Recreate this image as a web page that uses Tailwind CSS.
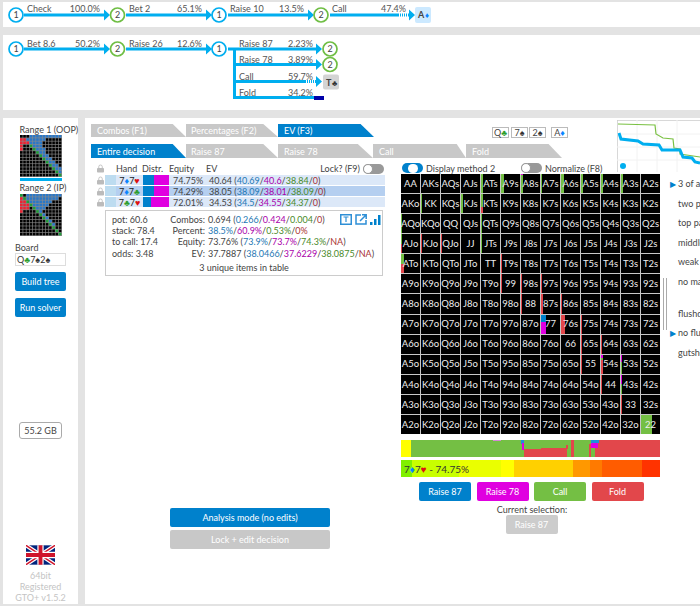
<!DOCTYPE html>
<html lang="en">
<head>
<meta charset="UTF-8">
<title>GTO+</title>
<script src="https://cdn.jsdelivr.net/npm/@tailwindcss/browser@4"></script>
</head>
<body class="bg-[#e3e3e3] w-[700px] h-[606px] overflow-hidden font-['Lato',sans-serif] text-[9px] leading-none text-[#444]">

<!-- line 1 of the tree -->
<div class="ml-[3px] mt-[2px] h-[25px] bg-white">
<svg width="697" height="25" viewBox="3 2 697 25" class="block font-['Lato',sans-serif] text-[9px]">
  <g stroke="#00aeef" stroke-width="3" fill="none">
    <path d="M24 15H106M126 15H208M228 15H310M330 15H398"/>
  </g>
  <path d="M398 15h12" stroke="#00aeef" stroke-width="3" stroke-dasharray="1 1"/>
  <g fill="#00aeef"><path d="M104 9.500l6 5.500-6 5.500zM206 9.500l6 5.500-6 5.500zM308 9.500l6 5.500-6 5.500zM409 9.500l6 5.500-6 5.500z"/></g>
  <g fill="#fff" stroke-width="1.700">
    <circle cx="16" cy="15" r="7" stroke="#00aeef"/><circle cx="117.500" cy="15" r="7" stroke="#6fbe44"/>
    <circle cx="219" cy="15" r="7" stroke="#00aeef"/><circle cx="321" cy="15" r="7" stroke="#6fbe44"/>
  </g>
  <g fill="#444" text-anchor="middle"><text x="16" y="18">1</text><text x="117.500" y="18">2</text><text x="219" y="18">1</text><text x="321" y="18">2</text></g>
  <g fill="#555"><text x="27" y="12">Check</text><text x="129" y="12">Bet 2</text><text x="230" y="12">Raise 10</text><text x="332" y="12">Call</text></g>
  <g fill="#555" text-anchor="end"><text x="100" y="12">100.0%</text><text x="202" y="12">65.1%</text><text x="304" y="12">13.5%</text><text x="406" y="12">47.4%</text></g>
  <rect x="415" y="7" width="16" height="16" rx="2" fill="#cce9ff"/>
  <text x="418" y="18" fill="#444" font-weight="700">A</text><text x="425" y="18" fill="#0a84ff" font-size="8">♦</text>
</svg>
</div>

<!-- line 2 of the tree -->
<div class="ml-[3px] mt-[8px] h-[75px] bg-white">
<svg width="697" height="75" viewBox="3 35 697 75" class="block font-['Lato',sans-serif] text-[9px]">
  <g stroke="#00aeef" stroke-width="3" fill="none">
    <path d="M24 49H106M126 49H208M228 49H318M234.500 49V97.500H314M235 64.500H318M235 81.500H306"/>
  </g>
  <path d="M305 81.500h14" stroke="#00aeef" stroke-width="3" stroke-dasharray="1 1"/>
  <g fill="#00aeef"><path d="M104 43.500l6 5.500-6 5.500zM206 43.500l6 5.500-6 5.500zM316 43.500l6 5.500-6 5.500zM316 59l6 5.500-6 5.500zM316 76l6 5.500-6 5.500z"/></g>
  <rect x="314" y="96" width="10" height="4" fill="#0000a8"/>
  <g fill="#fff" stroke-width="1.700">
    <circle cx="16" cy="49" r="7" stroke="#00aeef"/><circle cx="117.500" cy="49" r="7" stroke="#6fbe44"/>
    <circle cx="219" cy="49" r="7" stroke="#00aeef"/><circle cx="330" cy="49" r="7" stroke="#6fbe44"/>
    <circle cx="330" cy="64.500" r="7" stroke="#6fbe44"/>
  </g>
  <g fill="#444" text-anchor="middle"><text x="16" y="52">1</text><text x="117.500" y="52">2</text><text x="219" y="52">1</text><text x="330" y="52">2</text><text x="330" y="67.500">2</text></g>
  <g fill="#555"><text x="27" y="47">Bet 8.6</text><text x="129" y="47">Raise 26</text><text x="239" y="47">Raise 87</text><text x="239" y="63">Raise 78</text><text x="239" y="80">Call</text><text x="239" y="96">Fold</text></g>
  <g fill="#555" text-anchor="end"><text x="100" y="47">50.2%</text><text x="202" y="47">12.6%</text><text x="313" y="47">2.23%</text><text x="313" y="63">3.89%</text><text x="313" y="80">59.7%</text><text x="313" y="96">34.2%</text></g>
  <rect x="323" y="74.500" width="16" height="15" rx="2" fill="#d4d4d4"/>
  <text x="326" y="85.500" fill="#444" font-weight="700">T</text><text x="332" y="85.500" fill="#333" font-size="8">♣</text>
</svg>
</div>

<div class="mt-[8px] ml-[3px] flex gap-[7px] h-[486px]">
  <!-- sidebar -->
  <aside class="w-[75px] bg-white flex flex-col items-center">
    <div class="mt-[7px] w-[42px] h-[10px] whitespace-nowrap">Range 1 (OOP)</div>
    <svg id="range1" width="42" height="42" class="block"></svg>
    <div class="mt-[1px] w-[42px] h-[3px] bg-[#00aeef]"></div>
    <div class="mt-[2px] w-[42px] h-[10px] whitespace-nowrap">Range 2 (IP)</div>
    <svg id="range2" width="42" height="42" class="mt-[1px] block"></svg>
    <div class="mt-[7px] h-[10px] w-[51px]">Board</div>
    <div class="w-[51px] h-[13px] border border-[#ddd] flex items-center pl-[1px] text-[#333]">Q<span class="text-[#2e9e2e]">♣</span>7<span>♠</span>2<span>♠</span></div>
    <button class="mt-[6px] w-[51px] h-[19px] bg-[#0081cc] rounded-[2px] text-white text-[9px]">Build tree</button>
    <button class="mt-[7px] w-[51px] h-[19px] bg-[#0081cc] rounded-[2px] text-white text-[9px]">Run solver</button>
    <div class="mt-[105px] w-[43px] h-[17px] border border-[#aaa] rounded-[3px] flex items-center justify-center">55.2 GB</div>
    <svg class="mt-[106px] block" width="29" height="20" viewBox="0 0 60 40">
      <rect width="60" height="40" fill="#00247d"/>
      <path d="M0 0L60 40M60 0L0 40" stroke="#fff" stroke-width="8"/>
      <path d="M0 0L60 40M60 0L0 40" stroke="#cf142b" stroke-width="3"/>
      <path d="M30 0V40M0 20H60" stroke="#fff" stroke-width="13"/>
      <path d="M30 0V40M0 20H60" stroke="#cf142b" stroke-width="8"/>
    </svg>
    <div class="mt-[5px] text-[#c4c4c4] text-center leading-[11.2px] whitespace-nowrap">64bit<br>Registered<br>GTO+ v1.5.2</div>
  </aside>

  <!-- main panel -->
  <main class="flex-1 bg-white pl-[6px] min-w-0 overflow-hidden">
    <div class="h-[44px] flex pt-[6px]">
      <div class="w-[520px] flex-none flex flex-col gap-[7px]">
        <div class="flex h-[13px]">
          <div class="w-[95px] h-[13px] bg-[#c8c8c8] text-white pl-[6px] flex items-center [clip-path:polygon(0_0,86%_0,100%_100%,0_100%)]">Combos (F1)</div>
          <div class="w-[92px] h-[13px] bg-[#c8c8c8] text-white pl-[5px] flex items-center [clip-path:polygon(0_0,84%_0,100%_100%,0_100%)]">Percentages (F2)</div>
          <div class="w-[96px] h-[13px] bg-[#0081cc] text-white pl-[6px] flex items-center [clip-path:polygon(0_0,86%_0,100%_100%,0_100%)]">EV (F3)</div>
          <div class="ml-[118px] mt-[3px] flex text-[#444]">
            <span class="w-[17px] h-[11px] border border-[#bbb] flex items-center justify-center">Q<span class="text-[#2e9e2e]">♣</span></span>
            <span class="ml-[2px] w-[17px] h-[11px] border border-[#bbb] flex items-center justify-center">7<span class="text-[#333]">♠</span></span>
            <span class="ml-[1px] w-[17px] h-[11px] border border-[#bbb] flex items-center justify-center">2<span class="text-[#333]">♠</span></span>
            <span class="ml-[5px] w-[17px] h-[11px] border border-[#bbb] flex items-center justify-center">A<span class="text-[#0a84ff]">♦</span></span>
          </div>
        </div>
        <div class="flex h-[14px]">
          <div class="w-[95px] h-[14px] bg-[#0081cc] text-white pl-[6px] flex items-center [clip-path:polygon(0_0,86%_0,100%_100%,0_100%)]">Entire decision</div>
          <div class="w-[92px] h-[14px] bg-[#c8c8c8] text-white pl-[5px] flex items-center [clip-path:polygon(0_0,84%_0,100%_100%,0_100%)]">Raise 87</div>
          <div class="w-[95px] h-[14px] bg-[#c8c8c8] text-white pl-[6px] flex items-center [clip-path:polygon(0_0,84%_0,100%_100%,0_100%)]">Raise 78</div>
          <div class="w-[93px] h-[14px] bg-[#c8c8c8] text-white pl-[6px] flex items-center [clip-path:polygon(0_0,90%_0,100%_100%,0_100%)]">Call</div>
          <div class="w-[96px] h-[14px] bg-[#c8c8c8] text-white pl-[6px] flex items-center [clip-path:polygon(0_0,86%_0,100%_100%,0_100%)]">Fold</div>
        </div>
      </div>
      <!-- hand strength graph -->
      <svg width="83" height="52" viewBox="0 0 83 52" class="ml-[6px] flex-none block -mt-[4px]">
        <path d="M0 52V0H83" fill="none" stroke="#ccc" stroke-width="1.500"/>
        <path d="M0 14H83M0 27H83M0 40H83M20 0V52M40 0V52M60 0V52" stroke="#f2f2f2"/>
        <path d="M1 4L38 5L39 14L46 18L56 19L57 28L63 29L63 34L83 37" fill="none" stroke="#7ac143" stroke-width="1.200"/>
        <path d="M2 13L4 19L21 21L26 24L42 25L45 30L63 30L66 37L75 38L78 42L83 43" fill="none" stroke="#00aeef" stroke-width="3"/>
        <circle cx="6" cy="46" r="3" fill="#00aeef"/>
      </svg>
    </div>

    <div class="flex">
      <!-- left column with the hand table -->
      <section class="w-[310px] flex-none">
        <div class="h-[13px] flex items-center">
          <svg class="ml-[6px] flex-none" width="7" height="9" viewBox="0 0 8 9"><path d="M2 4V2.500a2 2 0 0 1 4 0V4" fill="none" stroke="#bbb"/><rect y="4" width="8" height="5" rx="1" fill="#bbb"/></svg>
          <span class="ml-[12px] w-[26px] flex-none">Hand</span><span class="w-[27px] flex-none">Distr.</span><span class="w-[37px] flex-none">Equity</span><span>EV</span>
          <span class="ml-auto mr-[3px]">Lock? (F9)</span>
          <span class="mr-[17px] w-[21px] h-[10px] rounded-full bg-[#999] flex items-center"><span class="w-[10px] h-[10px] rounded-full bg-white border border-[#999]"></span></span>
        </div>
        <div class="flex flex-col gap-[1px]">
          <div class="flex items-center h-[10px]">
            <svg class="ml-[6px] flex-none" width="7" height="9" viewBox="0 0 8 9"><path d="M2 4V2.500a2 2 0 0 1 4 0V4" fill="none" stroke="#bbb"/><rect y="4" width="8" height="5" rx="1" fill="#bbb"/></svg>
            <div class="ml-[1px] w-[280px] h-[10px] bg-[#dce8f8] flex items-center">
              <span class="w-[11px] h-full bg-[#bddcf0]"></span>
              <span class="w-[27px] text-center text-[#222]">7<span class="text-[#0a84ff]">♦</span>7<span class="text-[#d11]">♥</span></span>
              <span class="w-[11px] h-full bg-[#0081cc]"></span><span class="w-[15px] h-full bg-[#e000e0]"></span>
              <span class="w-[37px] pl-[4px]">74.75%</span>
              <span class="pl-[3px] whitespace-nowrap">40.64 (<span class="text-[#1e78b4]">40.69</span>/<span class="text-[#a0a]">40.6</span>/<span class="text-[#4a8a2a]">38.84</span>/<span class="text-[#a33]">0</span>)</span>
            </div>
          </div>
          <div class="flex items-center h-[10px]">
            <svg class="ml-[6px] flex-none" width="7" height="9" viewBox="0 0 8 9"><path d="M2 4V2.500a2 2 0 0 1 4 0V4" fill="none" stroke="#bbb"/><rect y="4" width="8" height="5" rx="1" fill="#bbb"/></svg>
            <div class="ml-[1px] w-[280px] h-[10px] bg-[#b5cff0] flex items-center">
              <span class="w-[11px] h-full bg-[#bddcf0]"></span>
              <span class="w-[27px] text-center text-[#222]">7<span class="text-[#0a84ff]">♦</span>7<span class="text-[#2e9e2e]">♣</span></span>
              <span class="w-[11px] h-full bg-[#0081cc]"></span><span class="w-[15px] h-full bg-[#e000e0]"></span>
              <span class="w-[37px] pl-[4px]">74.29%</span>
              <span class="pl-[3px] whitespace-nowrap">38.05 (<span class="text-[#1e78b4]">38.09</span>/<span class="text-[#a0a]">38.01</span>/<span class="text-[#4a8a2a]">38.09</span>/<span class="text-[#a33]">0</span>)</span>
            </div>
          </div>
          <div class="flex items-center h-[10px]">
            <svg class="ml-[6px] flex-none" width="7" height="9" viewBox="0 0 8 9"><path d="M2 4V2.500a2 2 0 0 1 4 0V4" fill="none" stroke="#bbb"/><rect y="4" width="8" height="5" rx="1" fill="#bbb"/></svg>
            <div class="ml-[1px] w-[280px] h-[10px] bg-[#dce8f8] flex items-center">
              <span class="w-[11px] h-full bg-[#bddcf0]"></span>
              <span class="w-[27px] text-center text-[#222]">7<span class="text-[#2e9e2e]">♣</span>7<span class="text-[#d11]">♥</span></span>
              <span class="w-[8px] h-full bg-[#0081cc]"></span><span class="w-[18px] h-full bg-[#e000e0]"></span>
              <span class="w-[37px] pl-[4px]">72.01%</span>
              <span class="pl-[3px] whitespace-nowrap">34.53 (<span class="text-[#1e78b4]">34.5</span>/<span class="text-[#a0a]">34.55</span>/<span class="text-[#4a8a2a]">34.37</span>/<span class="text-[#a33]">0</span>)</span>
            </div>
          </div>
        </div>

        <!-- details box -->
        <div class="relative ml-[14px] mt-[3px] w-[278px] h-[66px] border border-[#ccc] pt-[3px] leading-[11.2px]">
          <div class="flex">
            <div class="w-[60px] flex-none pl-[6px] whitespace-nowrap">pot: 60.6<br>stack: 78.4<br>to call: 17.4<br>odds: 3.48</div>
            <div class="w-[39px] flex-none whitespace-nowrap flex flex-col items-end">
              <span>Combos:</span><span>Percent:</span><span>Equity:</span><span>EV:</span>
            </div>
            <div class="pl-[3px] whitespace-nowrap">
              0.694 (<span class="text-[#1e78b4]">0.266</span>/<span class="text-[#a0a]">0.424</span>/<span class="text-[#4a8a2a]">0.004</span>/<span class="text-[#a33]">0</span>)<br>
              <span class="text-[#1e78b4]">38.5%</span>/<span class="text-[#a0a]">60.9%</span>/<span class="text-[#4a8a2a]">0.53%</span>/<span class="text-[#a33]">0%</span><br>
              73.76% (<span class="text-[#1e78b4]">73.9%</span>/<span class="text-[#a0a]">73.7%</span>/<span class="text-[#4a8a2a]">74.3%</span>/<span class="text-[#a33]">NA</span>)<br>
              37.7887 (<span class="text-[#1e78b4]">38.0466</span>/<span class="text-[#a0a]">37.6229</span>/<span class="text-[#4a8a2a]">38.0875</span>/<span class="text-[#a33]">NA</span>)
            </div>
          </div>
          <div class="mt-[3px] text-center">3 unique items in table</div>
          <div class="absolute top-[3px] right-[1px] flex gap-[3px] items-center">
            <svg width="12" height="11" viewBox="0 0 12 11"><rect x="0.750" y="0.750" width="10.500" height="9.500" fill="none" stroke="#2e8fd6" stroke-width="1.500"/><path d="M3.500 3H8.500M6 3V8" stroke="#2e8fd6" stroke-width="1.200"/></svg>
            <svg width="12" height="11" viewBox="0 0 12 11"><path d="M6 1H1V10H11V6" fill="none" stroke="#2e8fd6" stroke-width="1.500"/><path d="M5 7L11 1M7 0.800H11.200V5" fill="none" stroke="#2e8fd6" stroke-width="1.500"/></svg>
            <svg width="11" height="11" viewBox="0 0 11 11"><path d="M0 8h2.500v3H0zM4 5h2.500v6H4zM8 1h2.500v10H8z" fill="#0081cc"/></svg>
          </div>
        </div>

        <div class="ml-[79px] mt-[232px] w-[160px] flex flex-col gap-[3px]">
          <button class="h-[19px] bg-[#0081cc] rounded-[2px] text-white text-[9px]">Analysis mode (no edits)</button>
          <button class="h-[19px] bg-[#c8c8c8] rounded-[2px] text-white text-[9px]">Lock + edit decision</button>
        </div>
      </section>

      <!-- strategy grid column -->
      <section class="w-[259px] flex-none">
        <div class="h-[12px] flex items-center">
          <span class="ml-[1px] w-[21px] h-[10px] rounded-full bg-[#0081cc] flex items-center justify-end flex-none"><span class="mr-[5px] w-[10px] h-[9px] rounded-full bg-white"></span></span>
          <span class="ml-[3px] w-[95px] flex-none">Display method 2</span>
          <span class="w-[21px] h-[10px] rounded-full bg-[#999] flex items-center flex-none"><span class="w-[10px] h-[10px] rounded-full bg-white border border-[#999]"></span></span>
          <span class="ml-[3px] whitespace-nowrap">Normalize (F8)</span>
        </div>
        <div id="grid" class="grid grid-cols-13 gap-px bg-[#c8c8c8] w-[259px] h-[260px]"></div>
        <svg width="259" height="17" viewBox="0 0 259 17" class="block mt-[6px]">
          <rect width="259" height="17" fill="#74bf44"/>
          <rect width="10" height="17" fill="#ffff00"/>
          <path d="M123 9H140V8H166V17H123ZM170 0H173V17H170ZM165 5H167V9H165ZM188 4H190V17H188ZM197 0H259V17H194V8H197Z" fill="#e2474b"/>
          <rect x="92" width="8" height="1" fill="#d58ad5"/>
          <path d="M120 0h3v4h-3zM190 0h8v3h-8z" fill="#1e90d8"/><path d="M121 3h2v7h-2zM190 3h7v5h-7z" fill="#e000e0"/>
        </svg>
        <div class="relative mt-[3px] w-[259px] h-[17px] flex">
          <span class="w-[11px] bg-[#80f000]"></span><span class="w-[47px] bg-[#c8ff00]"></span><span class="w-[42px] bg-[#eaff00]"></span><span class="w-[13px] bg-[#ffff00]"></span><span class="w-[59px] bg-[#ffd000]"></span><span class="w-[17px] bg-[#ff9800]"></span><span class="w-[12px] bg-[#ff7a00]"></span><span class="w-[40px] bg-[#ff5c00]"></span><span class="w-[18px] bg-[#ff3300]"></span>
          <span class="absolute left-[3px] top-[4px] text-[#333] text-[10px]">7<span class="text-[#0a84ff]">♦</span>7<span class="text-[#d11]">♥</span> - 74.75%</span>
        </div>
        <div class="mt-[5px] ml-[18px] flex gap-[5.5px]">
          <button class="w-[52px] h-[19px] bg-[#0081cc] rounded-[2px] text-white text-[9px]">Raise 87</button>
          <button class="w-[52px] h-[19px] bg-[#e000e0] rounded-[2px] text-white text-[9px]">Raise 78</button>
          <button class="w-[52px] h-[19px] bg-[#74bf44] rounded-[2px] text-white text-[9px]">Call</button>
          <button class="w-[52px] h-[19px] bg-[#e2474b] rounded-[2px] text-white text-[9px]">Fold</button>
        </div>
        <div class="mt-[4px] text-center pl-[3px]">Current selection:</div>
        <div class="mt-[1px] mx-auto w-[52px] h-[19px] translate-x-[1px] bg-[#cccccc] rounded-[2px] text-white flex items-center justify-center">Raise 87</div>
      </section>

      <!-- hand categories, cut off by the window as in the app -->
      <section class="flex-none w-[45px] pt-[17px] relative whitespace-nowrap">
        <div class="h-[19.5px] pl-[18px] relative"><span class="absolute left-[10px] top-[1px] text-[#0081cc] text-[8px]">▶</span>3 of a kind</div>
        <div class="h-[19.5px] pl-[18px]">two pair</div>
        <div class="h-[19.5px] pl-[18px]">top pair</div>
        <div class="h-[19.5px] pl-[18px]">middle pair</div>
        <div class="h-[19.5px] pl-[18px]">weak pair</div>
        <div class="h-[32px] pl-[18px]">no made hand</div>
        <div class="h-[19.5px] pl-[18px]">flushdraw</div>
        <div class="h-[19.5px] pl-[18px] relative"><span class="absolute left-[10px] top-[1px] text-[#0081cc] text-[8px]">▶</span>no flushdraw</div>
        <div class="h-[19.5px] pl-[18px]">gutshot</div>
        <div class="absolute left-[3px] top-[116px] w-[4px] h-[52px] border-x border-[#aaa]"></div>
      </section>
    </div>
  </main>
</div>

<script>
  const ranks = ["A","K","Q","J","T","9","8","7","6","5","4","3","2"];
  const grid = document.getElementById("grid");
  const G = "#74bf44", R = "#e2474b", M = "#e000e0", B = "#0081cc";
  // row, col, width%, colour, top%, height%
  const bars = [
    [0,4,8,G],[0,5,15,G],[0,6,12,G,5,95],[0,6,12,M,0,5],[0,7,6,G],[0,8,15,G],[0,9,8,G],[0,10,13,G],[0,11,13,G],
    [1,3,8,G],[1,4,8,G,0,70],[1,4,8,R,70,30],[1,1,3,G],[2,0,6,G],[2,4,6,G],[3,0,5,G,0,50],[3,0,5,R,50,50],
    [3,1,3,R],[3,2,3,R],[3,4,5,G],[4,0,15,G,0,50],[4,0,15,R,50,50],[4,5,5,R],[5,5,5,R],[5,6,4,R],[5,7,4,R],[6,6,4,R],[6,7,10,R],[6,8,4,R],
    [7,7,25,B,0,40],[7,7,25,M,40,60],[7,8,20,R],[7,9,6,R],[8,9,6,R],[8,10,4,R],[9,9,5,R],[9,10,10,R,30,70],[9,10,10,M,0,15],[9,10,10,G,15,15],
    [9,11,6,G,40,60],[9,11,6,M,0,40],[10,10,5,R],[10,11,6,G,50,50],[10,11,6,M,0,50],[11,11,6,R],[12,12,57,G]
  ];
  ranks.forEach((a, r) => ranks.forEach((b, c) => {
    const cell = document.createElement("div");
    cell.className = "relative bg-black text-[#eee] text-[9.5px] flex items-center justify-center overflow-hidden";
    const name = r === c ? a + b : r < c ? a + b + "s" : b + a + "o";
    bars.filter(x => x[0] === r && x[1] === c).forEach(x => {
      const bar = document.createElement("div");
      bar.className = "absolute left-0";
      bar.style.cssText = `width:${x[2]}%;background:${x[3]};top:${x[4] ?? 0}%;height:${x[5] ?? 100}%`;
      cell.appendChild(bar);
    });
    const label = document.createElement("span");
    label.className = "relative";
    label.textContent = name;
    cell.appendChild(label);
    grid.appendChild(cell);
  }));

  // small range pictures in the sidebar
  function drawRange(id, diagFrom, blue, red) {
    let out = "";
    for (let r = 0; r < 13; r++) for (let c = 0; c < 13; c++) {
      let fill = "#000";
      if (r === c && r >= diagFrom) fill = "#1f9d3a";
      else if (blue[r] && c >= blue[r][0] && c <= blue[r][1]) fill = "#2a78c8";
      else if (red[r] !== undefined && c <= red[r]) fill = "#ee2233";
      out += `<rect x="${c * 3.23}" y="${r * 3.23}" width="2.6" height="2.6" fill="${fill}"/>`;
    }
    document.getElementById(id).innerHTML = `<rect width="42" height="42" fill="#8a8a8a"/>` + out;
  }
  drawRange("range1", 3,
    [[3,12],[2,7],[3,6],[4,6],[5,7],[6,7],[7,8],[8,9],[9,10],[10,11],[11,12],[12,12]],
    {1:1, 2:2, 3:0, 4:0});
  drawRange("range2", 0,
    [[2,12],[2,11],[3,9],[4,8],[5,7],[6,6],[7,7],[8,8],[9,9],[10,10]],
    {1:0, 2:1, 3:2, 4:2, 5:0});
</script>
</body>
</html>
